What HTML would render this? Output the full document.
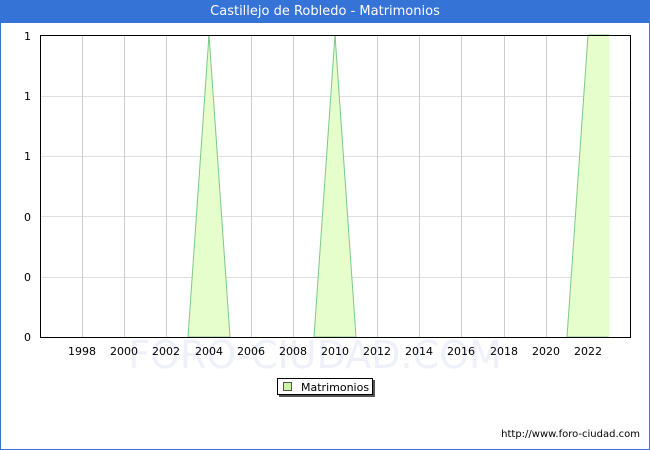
<!DOCTYPE html>
<html><head><style>
body{margin:0;width:650px;height:450px;overflow:hidden;background:#fff;font-family:"DejaVu Sans","Liberation Sans",sans-serif;}
.frame{position:absolute;left:0;top:0;width:648px;height:448px;border:1px solid #3673d6;}
.title{position:absolute;left:0;top:0;width:650px;height:23px;background:#3673d6;color:#fff;font-size:13px;text-align:center;line-height:23px;}
</style></head><body>
<div class="frame"></div>
<div class="title">Castillejo de Robledo - Matrimonios</div>
<svg width="650" height="450" style="position:absolute;left:0;top:0" font-family="DejaVu Sans, Liberation Sans, sans-serif">
<text x="315" y="368" font-size="38" fill="#eef0fa" text-anchor="middle">FORO-CIUDAD.COM</text>
<g stroke="#cccccc" stroke-width="1">
<line x1="40" y1="96.5" x2="630" y2="96.5" stroke="#e0e0e0"/>
<line x1="40" y1="156.5" x2="630" y2="156.5" stroke="#e0e0e0"/>
<line x1="40" y1="216.5" x2="630" y2="216.5" stroke="#e0e0e0"/>
<line x1="40" y1="277.5" x2="630" y2="277.5" stroke="#e0e0e0"/>
<line x1="82.5" y1="35" x2="82.5" y2="337"/><line x1="124.5" y1="35" x2="124.5" y2="337"/>
<line x1="166.5" y1="35" x2="166.5" y2="337"/><line x1="208.5" y1="35" x2="208.5" y2="337"/>
<line x1="251.5" y1="35" x2="251.5" y2="337"/><line x1="293.5" y1="35" x2="293.5" y2="337"/>
<line x1="335.5" y1="35" x2="335.5" y2="337"/><line x1="377.5" y1="35" x2="377.5" y2="337"/>
<line x1="419.5" y1="35" x2="419.5" y2="337"/><line x1="461.5" y1="35" x2="461.5" y2="337"/>
<line x1="504.5" y1="35" x2="504.5" y2="337"/><line x1="546.5" y1="35" x2="546.5" y2="337"/>
<line x1="588.5" y1="35" x2="588.5" y2="337"/>
</g>
<g fill="#e6fdcc" stroke="#7cc98a" stroke-width="1">
<polygon points="188,337 209,35 230,337"/>
<polygon points="314,337 335,35 356,337"/>
<polygon points="567,337 588,35 609,35 609,337" />
</g>
<line x1="609" y1="35" x2="609" y2="337" stroke="#e6fdcc" stroke-width="1"/>
<rect x="40.5" y="35.5" width="590" height="302" fill="none" stroke="#000"/>
<g font-size="11" fill="#000" text-anchor="middle">
<text x="82" y="355">1998</text><text x="124" y="355">2000</text><text x="166" y="355">2002</text>
<text x="209" y="355">2004</text><text x="251" y="355">2006</text><text x="293" y="355">2008</text>
<text x="335" y="355">2010</text><text x="377" y="355">2012</text><text x="419" y="355">2014</text>
<text x="461" y="355">2016</text><text x="504" y="355">2018</text><text x="546" y="355">2020</text>
<text x="588" y="355">2022</text>
</g>
<g font-size="11" fill="#000" text-anchor="end">
<text x="31" y="40">1</text><text x="31" y="100">1</text><text x="31" y="160">1</text>
<text x="31" y="221">0</text><text x="31" y="281">0</text><text x="31" y="341">0</text>
</g>
<rect x="279" y="380" width="96" height="17" fill="#555"/>
<rect x="277.5" y="378.5" width="95" height="16" fill="#fff" stroke="#000"/>
<rect x="283.5" y="382.5" width="8" height="8" fill="#ccf5a0" stroke="#555"/>
<text x="301" y="391" font-size="11">Matrimonios</text>
<text x="640" y="437" font-size="10" text-anchor="end">http://www.foro-ciudad.com</text>
</svg>
</body></html>
